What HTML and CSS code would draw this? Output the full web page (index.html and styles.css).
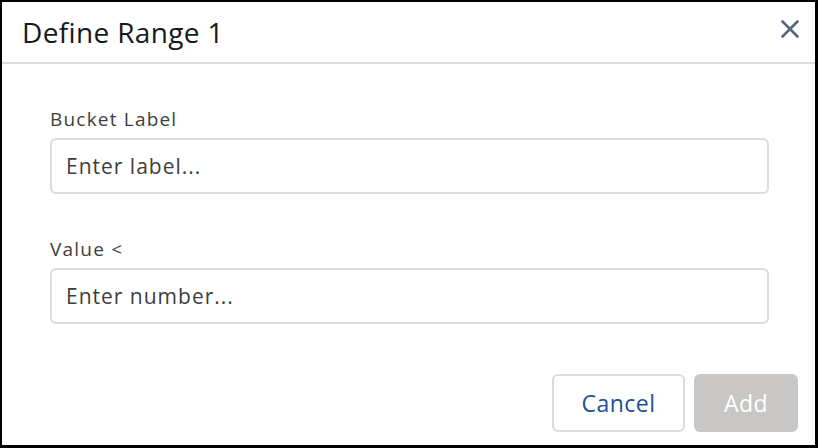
FILE: index.html
```html
<!DOCTYPE html>
<html lang="en">
<head>
<meta charset="utf-8">
<title>Define Range 1</title>
<link rel="stylesheet" href="styles.css">
</head>
<body>
<div class="dialog">
  <div class="header">
    <h1 class="title">Define Range 1</h1>
    <button class="close" aria-label="Close">
      <svg width="18" height="18" viewBox="0 0 18 18"><path d="M1.5 1.5 L16.5 16.5 M16.5 1.5 L1.5 16.5" stroke="#56667f" stroke-width="2.6" stroke-linecap="round"/></svg>
    </button>
  </div>
  <div class="body">
    <div class="field">
      <label class="label">Bucket Label</label>
      <div class="input">Enter label...</div>
    </div>
    <div class="field">
      <label class="label">Value &lt;</label>
      <div class="input">Enter number...</div>
    </div>
  </div>
  <div class="footer">
    <button class="btn btn-cancel">Cancel</button>
    <button class="btn btn-add">Add</button>
  </div>
</div>
</body>
</html>
```
FILE: styles.css
```css
html, body {
  margin: 0;
  padding: 0;
  background: #fff;
}
body {
  font-family: "Open Sans", Lato, sans-serif;
  color: #3e3e3c;
}
.dialog {
  box-sizing: border-box;
  width: 818px;
  height: 448px;
  border: 2px solid #000;
  border-right-width: 3px;
  border-bottom-width: 3px;
  display: flex;
  flex-direction: column;
  background: #fff;
}
.header {
  box-sizing: border-box;
  height: 62px;
  flex: none;
  display: flex;
  align-items: center;
  justify-content: space-between;
  padding: 0 15px 0 20px;
  border-bottom: 2px solid #dddbda;
}
.title {
  margin: 0;
  font-size: 28px;
  font-weight: 400;
  letter-spacing: 0.35px;
  color: #16191c;
}
.close {
  border: 0;
  background: none;
  padding: 0;
  width: 20px;
  height: 20px;
  margin-bottom: 7px;
  display: flex;
  align-items: center;
  justify-content: center;
}
.body {
  flex: 1;
  padding: 43px 46px 0 48px;
  display: flex;
  flex-direction: column;
  gap: 43px;
}
.field {
  display: flex;
  flex-direction: column;
  gap: 7px;
}
.label {
  font-size: 19px;
  line-height: 24px;
  letter-spacing: 1.2px;
  color: #3e3e3c;
}
.input {
  box-sizing: border-box;
  height: 56px;
  border: 2px solid #dddbda;
  border-radius: 6px;
  padding: 0 14px;
  display: flex;
  align-items: center;
  font-size: 21px;
  letter-spacing: 1px;
  color: #3e3e3c;
}
.footer {
  display: flex;
  justify-content: flex-end;
  gap: 9px;
  padding: 0 17px 13px 0;
}
.btn {
  box-sizing: border-box;
  height: 58px;
  border-radius: 6px;
  font-family: "Open Sans", Lato, sans-serif;
  font-size: 23px;
  letter-spacing: 0.5px;
  padding: 0;
}
.btn-cancel {
  width: 133px;
  background: #fff;
  border: 2px solid #dddbda;
  color: #1b5297;
}
.btn-add {
  width: 104px;
  background: #c9c7c5;
  border: 0;
  color: #fff;
}
```
